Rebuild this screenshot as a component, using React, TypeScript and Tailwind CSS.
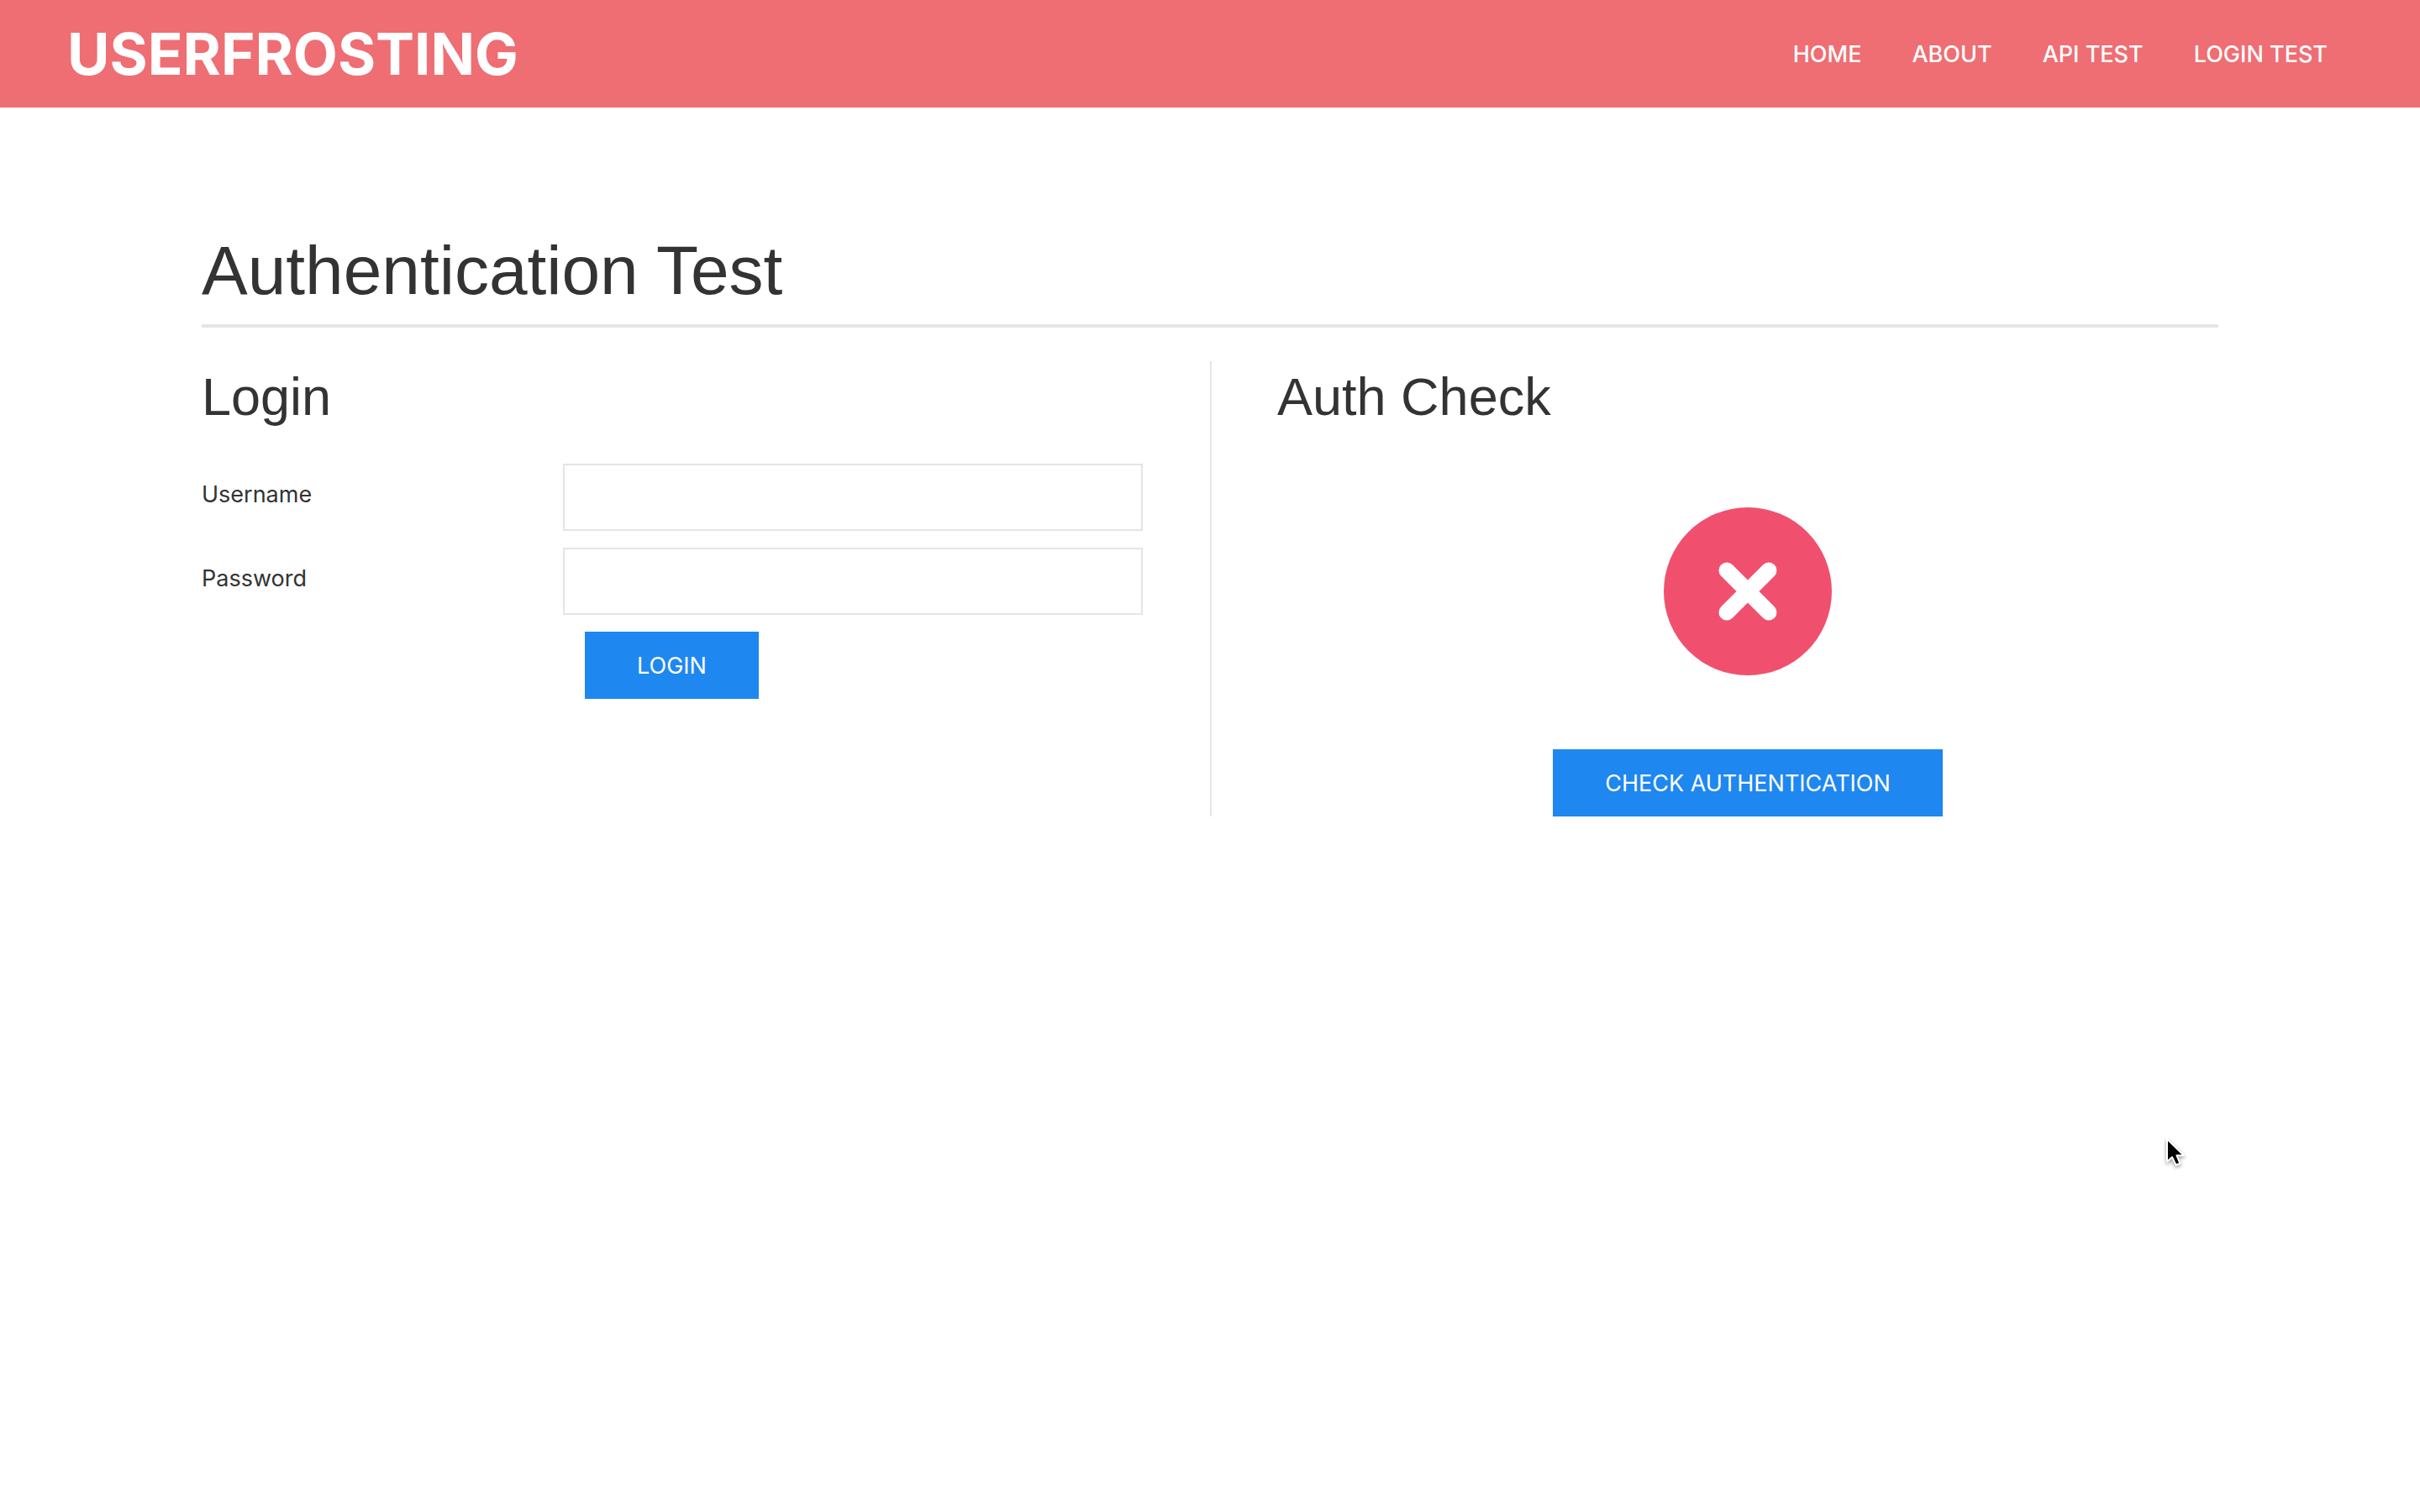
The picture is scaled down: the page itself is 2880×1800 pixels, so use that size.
const navItems = ["Home", "About", "API Test", "Login Test"];

const fields = [
  { id: "username", label: "Username", type: "text" },
  { id: "password", label: "Password", type: "password" },
];

const headingClass = "font-['Liberation_Sans',sans-serif] text-[63px] leading-[84px]";

const buttonClass =
  "h-20 bg-[#1e87f0] px-[62px] pt-0.5 text-[27px] leading-[76px] text-white uppercase hover:bg-[#0f7ae5]";

function Navbar() {
  return (
    <header className="flex h-32 items-center justify-between bg-[#ee6e73] px-20">
      <a href="#" className="text-[69px] leading-none font-bold text-white">
        USERFROSTING
      </a>
      <nav className="flex pt-0.5">
        {navItems.map((item) => (
          <a
            key={item}
            href="#"
            className="px-[30px] text-[27px] leading-[42px] font-medium text-white uppercase"
          >
            {item}
          </a>
        ))}
      </nav>
    </header>
  );
}

function LoginForm() {
  return (
    <section className="pr-20">
      <h2 className={headingClass}>Login</h2>
      <form className="mt-[38px] flex flex-col gap-5" onSubmit={(e) => e.preventDefault()}>
        {fields.map((f) => (
          <div key={f.id} className="flex items-start">
            <label htmlFor={f.id} className="w-[430px] shrink-0 pt-4 text-[27px] leading-[42px]">
              {f.label}
            </label>
            <input
              id={f.id}
              type={f.type}
              className="h-20 min-w-0 flex-1 border-2 border-[#e5e5e5] bg-white px-5 text-[32px] outline-none focus:border-[#1e87f0]"
            />
          </div>
        ))}
        <div className="pl-[456px]">
          <button type="submit" className={buttonClass}>
            Login
          </button>
        </div>
      </form>
    </section>
  );
}

function AuthCheck() {
  return (
    <section className="border-l-2 border-[#e5e5e5] pl-[78px]">
      <h2 className={headingClass}>Auth Check</h2>
      <div className="mt-[90px] flex flex-col items-center gap-[88px]">
        <svg viewBox="0 0 200 200" className="size-[200px]" role="img" aria-label="Not authenticated">
          <circle cx="100" cy="100" r="100" fill="#f0506e" />
          <path d="M75 75 125 125M125 75 75 125" stroke="#fff" strokeWidth="19" strokeLinecap="round" />
        </svg>
        <button type="button" className={buttonClass}>
          Check Authentication
        </button>
      </div>
    </section>
  );
}

function Cursor() {
  return (
    <svg
      viewBox="0 0 26 38"
      className="pointer-events-none absolute top-[1354px] left-[2577px] w-[26px] drop-shadow-[0_2px_2px_rgba(0,0,0,0.4)]"
      aria-hidden="true"
    >
      <path
        d="M2 2V29L8 23.500L12.500 33L17.500 31L13.500 21.500H22Z"
        fill="#000"
        stroke="#fff"
        strokeWidth="2"
        strokeLinejoin="round"
      />
    </svg>
  );
}

export default function App() {
  return (
    <div className="relative min-h-screen bg-white font-['Inter',sans-serif] text-[#333]">
      <Navbar />
      <main className="px-60 pt-36">
        <h1 className="border-b-4 border-[#e5e5e5] pb-[14px] font-['Liberation_Sans',sans-serif] text-[82px] leading-[100px]">
          Authentication Test
        </h1>
        <div className="mt-10 grid grid-cols-2">
          <LoginForm />
          <AuthCheck />
        </div>
      </main>
      <Cursor />
    </div>
  );
}
